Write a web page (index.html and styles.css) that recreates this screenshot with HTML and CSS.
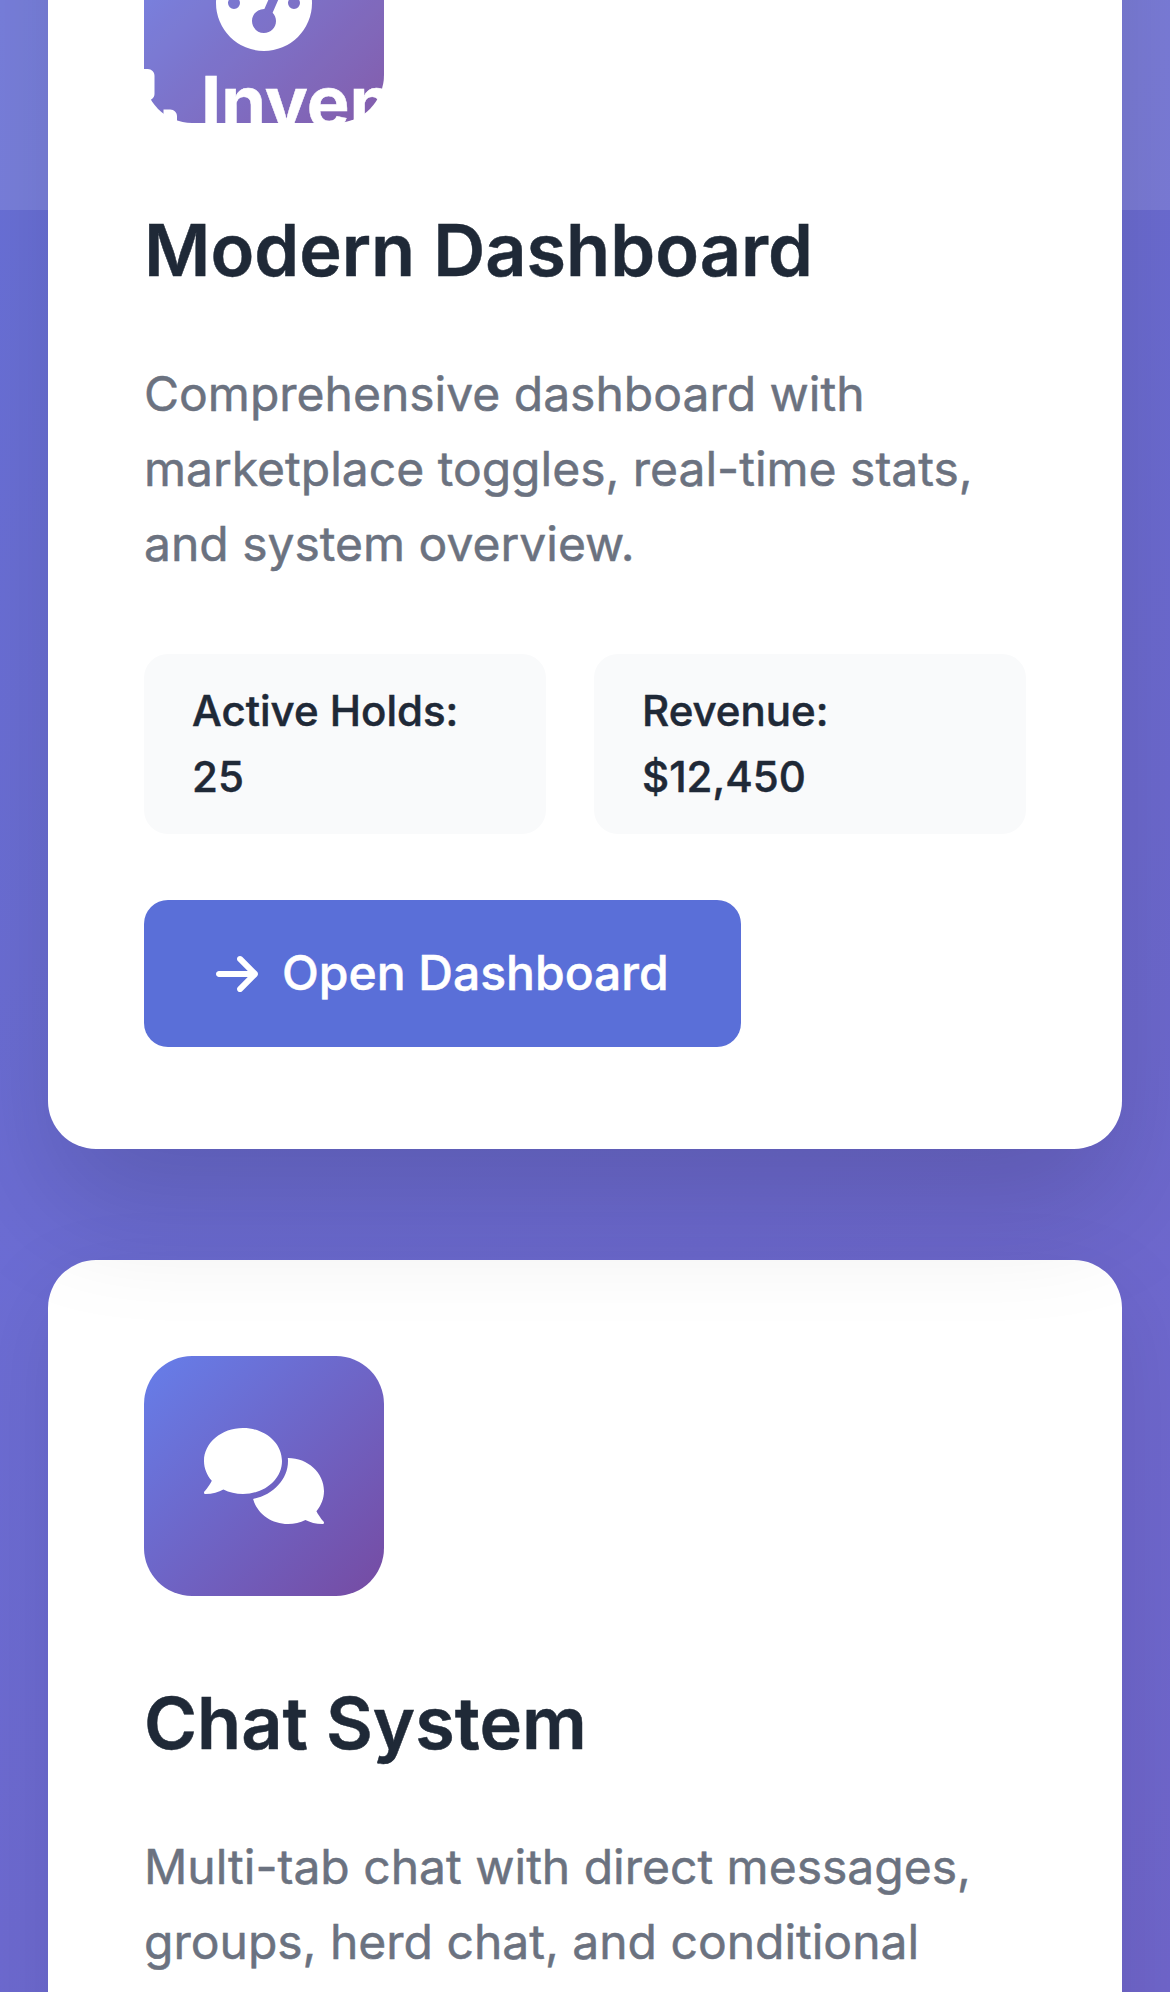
FILE: index.html
```html
<!DOCTYPE html>
<html lang="en">
<head>
<meta charset="utf-8">
<title>Dashboard</title>
<link rel="stylesheet" href="styles.css">
</head>
<body>
<header class="navbar">
  <div class="brand">
    <svg class="brand-icon" viewBox="0 0 576 512" aria-hidden="true"><path d="M208 0h32v80c0 9 7 16 16 16h64c9 0 16-7 16-16V0h32c27 0 48 21 48 48v128c0 27-21 48-48 48H208c-27 0-48-21-48-48V48c0-27 21-48 48-48zM48 288h48v80c0 9 7 16 16 16h64c9 0 16-7 16-16v-80h32c27 0 48 21 48 48v128c0 27-21 48-48 48H48c-27 0-48-21-48-48V336c0-27 21-48 48-48zm304 0h32v80c0 9 7 16 16 16h64c9 0 16-7 16-16v-80h48c27 0 48 21 48 48v128c0 27-21 48-48 48H352c-27 0-48-21-48-48V336c0-27 21-48 48-48z"/></svg>
    <span class="brand-name">Inventory</span>
  </div>
</header>
<main class="cards">
  <article class="card card-raised">
    <div class="card-icon">
      <svg class="gauge" viewBox="0 0 512 512" aria-hidden="true"><path fill-rule="evenodd" d="M0 256a256 256 0 1 1 512 0 256 256 0 1 1-512 0zm288-160a32 32 0 1 0-64 0 32 32 0 1 0 64 0zM256 416c35.300 0 64-28.700 64-64 0-17.400-6.900-33.100-18.100-44.600L366 161.700c5.300-12.100-.2-26.300-12.300-31.600s-26.300.2-31.600 12.300L257.900 288H256c-35.300 0-64 28.700-64 64s28.700 64 64 64zM176 144a32 32 0 1 0-64 0 32 32 0 1 0 64 0zM96 288a32 32 0 1 0 0-64 32 32 0 1 0 0 64zm352-32a32 32 0 1 0-64 0 32 32 0 1 0 64 0z"/></svg>
    </div>
    <h2 class="title">Modern Dashboard</h2>
    <p class="text">Comprehensive dashboard with marketplace toggles, real-time stats, and system overview.</p>
    <div class="stats">
      <div class="stat stat-holds">Active Holds:<br>25</div>
      <div class="stat stat-revenue">Revenue:<br>$12,450</div>
    </div>
    <a class="button"><svg class="arrow" viewBox="0 0 448 512" aria-hidden="true"><path d="M438.600 278.600c12.500-12.500 12.500-32.800 0-45.300l-160-160c-12.500-12.500-32.800-12.500-45.300 0s-12.500 32.800 0 45.300L338.800 224H32c-17.700 0-32 14.300-32 32s14.300 32 32 32h306.700L233.400 393.400c-12.500 12.500-12.500 32.800 0 45.300s32.800 12.500 45.300 0l160-160z"/></svg>Open Dashboard</a>
  </article>
  <article class="card card-chat">
    <div class="card-icon">
      <svg class="comments" viewBox="0 0 640 512" aria-hidden="true"><path d="M416 176C416 78.800 322.900 0 208 0S0 78.800 0 176c0 39.570 15.620 75.960 41.670 105.400-16.390 32.760-39.230 57.320-39.590 57.680-2.100 2.205-2.670 5.475-1.441 8.354C1.900 350.300 4.602 352 7.660 352c38.350 0 70.760-11.120 95.740-24.040C134.200 343.100 169.800 352 208 352c114.900 0 208-78.800 208-176zm183.600 267.700C624.800 413.900 640 376.600 640 336c0-97.200-86-176-192-176-.3 0-.6.040-.93.043C447.500 165.300 448 170.600 448 176c0 98.620-79.680 181.200-186.100 202.500C282.700 455.100 357.800 512 448 512c33.690 0 65.320-8.008 92.850-21.980C565.200 502 596.100 512 632.300 512c3.059 0 5.760-1.725 7.020-4.605 1.229-2.879.658-6.148-1.441-8.354-.279-.341-21.979-23.741-38.279-55.341z"/></svg>
    </div>
    <h2 class="title">Chat System</h2>
    <p class="text">Multi-tab chat with direct messages, groups, herd chat, and conditional</p>
  </article>
</main>
</body>
</html>
```

FILE: styles.css
```css
* { box-sizing: border-box; margin: 0; padding: 0; }
body {
  height: 1992px;
  overflow: hidden;
  font-family: Inter, "Liberation Sans", sans-serif;
  line-height: 1.6;
  color: #1f2937;
  background: linear-gradient(135deg, #6a72da 0%, #6f65ca 100%);
  -webkit-text-stroke: .5px currentColor;
}
.navbar {
  position: absolute;
  z-index: 5;
  top: 0;
  left: 0;
  width: 100%;
  height: 210px;
  overflow: hidden;
  background: rgba(255, 255, 255, .1);
  color: #fff;
}
.brand { display: flex; align-items: center; gap: 24px; padding: 52px 0 0 96px; }
.brand-icon { width: 81px; height: 72px; margin-top: 5px; fill: currentColor; }
.brand-name { font-size: 72px; font-weight: 700; line-height: 100px; }
.cards { display: flex; flex-direction: column; gap: 111px; padding: 0 48px; margin-top: -213px; }
.card {
  padding: 96px;
  background: #fff;
  border-radius: 48px;
  box-shadow: 0 30px 90px rgba(0, 0, 0, .1);
}
.card-raised { position: relative; height: 1362px; box-shadow: 0 60px 120px rgba(0, 0, 0, .15); }
.card-chat { height: 828px; border-radius: 48px 48px 0 0; }
.card-icon {
  display: flex;
  align-items: center;
  justify-content: center;
  width: 240px;
  height: 240px;
  margin-bottom: 69px;
  border-radius: 48px;
  background: linear-gradient(135deg, #667eea, #764ba2);
}
.card-icon svg { height: 96px; fill: #fff; }
.gauge { width: 96px; }
.comments { width: 120px; }
.title { margin-bottom: 49px; font-size: 72px; font-weight: 600; line-height: 115px; }
.text { margin-bottom: 73px; font-size: 48px; line-height: 75px; color: #6b7280; }
.stats { display: flex; gap: 48px; margin-bottom: 66px; }
.stat {
  padding: 24px 48px;
  border-radius: 24px;
  background: #f9fafb;
  font-size: 42px;
  font-weight: 500;
  line-height: 66px;
}
.stat-holds { width: 402px; }
.stat-revenue { width: 432px; }
.button {
  display: inline-flex;
  align-items: center;
  gap: 24px;
  height: 147px;
  padding: 0 72px;
  border-radius: 24px;
  background: #5a6fd8;
  color: #fff;
  font-size: 48px;
  font-weight: 500;
}
.arrow { width: 42px; height: 48px; fill: currentColor; }
```
